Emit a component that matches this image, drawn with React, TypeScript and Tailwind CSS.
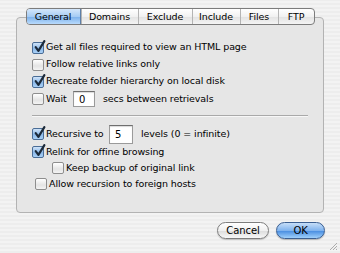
import React from 'react';

const font = { fontFamily: '"DejaVu Sans", Verdana, sans-serif' };

const tabs = [
  { label: 'General', w: 'w-[54px]' },
  { label: 'Domains', w: 'w-[57px]' },
  { label: 'Exclude', w: 'w-[54px]' },
  { label: 'Include', w: 'w-[48px]' },
  { label: 'Files', w: 'w-[38px]' },
  { label: 'FTP', w: 'w-[36px]' },
];

const Check: React.FC<{ on?: boolean }> = ({ on }) => (
  <span
    className={`relative inline-block w-[12px] h-[12px] shrink-0 rounded-[2px] border ${
      on
        ? 'border-[#4a6d96] bg-[linear-gradient(#cfe3f8,#8dbaea_55%,#a9d0f6)]'
        : 'border-[#8e8e8e] bg-[linear-gradient(#ffffff,#e4e4e4_60%,#f4f4f4)]'
    }`}
  >
    {on && (
      <svg viewBox="0 0 12 12" className="absolute left-[0px] top-[-3px] w-[13px] h-[13px]">
        <path d="M2.5 6.5 L5 10 L10.5 1" fill="none" stroke="#1c2a3a" strokeWidth="2" strokeLinecap="round" strokeLinejoin="round" />
      </svg>
    )}
  </span>
);

const Field: React.FC<{ value: string; w: string; h: string }> = ({ value, w, h }) => (
  <span
    className={`inline-flex items-center shrink-0 ${w} ${h} bg-white border border-[#9a9a9a] border-t-[#6f6f6f] pl-[5px] text-[10px] text-black shadow-[inset_0_1px_1px_rgba(0,0,0,0.15)]`}
  >
    {value}
  </span>
);

export default function App() {
  return (
    <div
      style={font}
      className="relative w-[340px] h-[253px] overflow-hidden px-[16px] pt-[8px] text-[9.5px] tracking-[-0.1px] text-black whitespace-nowrap bg-[repeating-linear-gradient(0deg,#ededed_0px,#ededed_2px,#f3f3f3_2px,#f3f3f3_4px)]"
    >
      <div className="relative z-10 flex justify-center">
        <div className="flex h-[17px] rounded-[4px] border border-[#7c7c7c] overflow-hidden bg-[linear-gradient(#ffffff,#f1f1f1_50%,#e3e3e3_55%,#f4f4f4)]">
          {tabs.map((t, i) => (
            <div
              key={t.label}
              className={`${t.w} flex items-center justify-center text-[9.5px] leading-none ${
                i > 0 ? 'border-l border-[#b4b4b4]' : ''
              } ${
                i === 0
                  ? 'bg-[linear-gradient(#d4e7fb,#a6ccf4_50%,#7fb3ec_55%,#b8dafc)] border-r border-[#5d7fa8]'
                  : ''
              }`}
            >
              {t.label}
            </div>
          ))}
        </div>
      </div>

      <div className="mt-[-8px] h-[196px] rounded-[4px] border border-[#b3b3b3] bg-[#e6e6e6] pl-[15px] pr-[15px] pt-[21px]">
        <div className="flex items-center gap-[2px] h-[17px]">
          <Check on />
          <span>Get all files required to view an HTML page</span>
        </div>
        <div className="flex items-center gap-[2px] h-[17px]">
          <Check />
          <span>Follow relative links only</span>
        </div>
        <div className="flex items-center gap-[2px] h-[17px]">
          <Check on />
          <span>Recreate folder hierarchy on local disk</span>
        </div>
        <div className="flex items-center gap-[2px] h-[18px]">
          <Check />
          <span className="w-[25px]">Wait</span>
          <Field value="0" w="w-[22px]" h="h-[16px]" />
          <span className="ml-[6px]">secs between retrievals</span>
        </div>

        <div className="mt-[7px] border-t border-[#a9a9a9] border-b border-b-[#f7f7f7]" />

        <div className="mt-[7px] flex items-center gap-[2px] h-[20px]">
          <Check on />
          <span className="w-[61px]">Recursive to</span>
          <Field value="5" w="w-[24px]" h="h-[19px]" />
          <span className="ml-[6px]">levels (0 = infinite)</span>
        </div>
        <div className="flex items-center gap-[2px] h-[16px]">
          <Check on />
          <span>Relink for offine browsing</span>
        </div>
        <div className="flex items-center gap-[2px] h-[16px] pl-[20px]">
          <Check />
          <span>Keep backup of original link</span>
        </div>
        <div className="flex items-center gap-[2px] h-[16px] pl-[3px]">
          <Check />
          <span>Allow recursion to foreign hosts</span>
        </div>
      </div>

      <div className="mt-[9px] flex justify-end gap-[7px] mr-[-1px]">
        <button className="w-[52px] h-[17px] rounded-full border border-[#7d7d7d] bg-[linear-gradient(#ffffff,#f0f0f0_50%,#dedede_55%,#f7f7f7)] text-[10px] leading-none text-black shadow-[0_1px_1px_rgba(0,0,0,0.2)]">
          Cancel
        </button>
        <button className="w-[49px] h-[17px] rounded-full border border-[#3b5f92] bg-[linear-gradient(#c6def8,#80b3ee_50%,#4c90e2_55%,#9fd0fb)] text-[10px] leading-none text-black shadow-[0_1px_1px_rgba(0,0,0,0.25)]">
          OK
        </button>
      </div>

      <svg viewBox="0 0 10 10" className="absolute right-[2px] bottom-[2px] w-[10px] h-[10px]">
        <path d="M9 2 L2 9 M9 5 L5 9 M9 8 L8 9" stroke="#9a9a9a" strokeWidth="0.8" />
      </svg>
    </div>
  );
}
